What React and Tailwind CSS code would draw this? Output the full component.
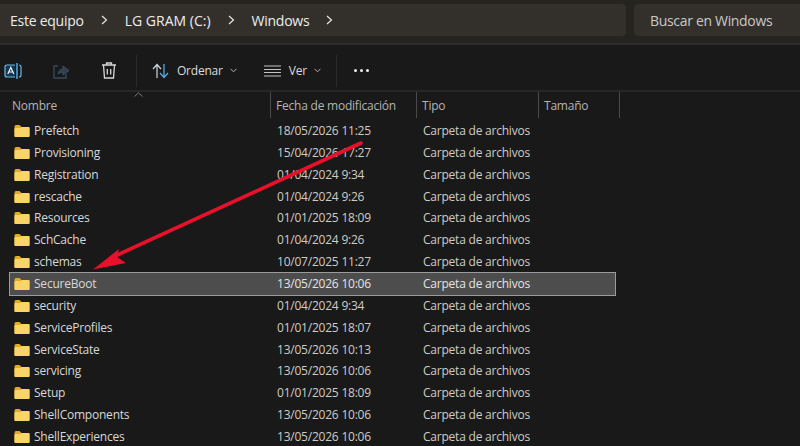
import React from "react";

const rows = [
  ["Prefetch", "18/05/2026 11:25"],
  ["Provisioning", "15/04/2026 17:27"],
  ["Registration", "01/04/2024 9:34"],
  ["rescache", "01/04/2024 9:26"],
  ["Resources", "01/01/2025 18:09"],
  ["SchCache", "01/04/2024 9:26"],
  ["schemas", "10/07/2025 11:27"],
  ["SecureBoot", "13/05/2026 10:06", true],
  ["security", "01/04/2024 9:34"],
  ["ServiceProfiles", "01/01/2025 18:07"],
  ["ServiceState", "13/05/2026 10:13"],
  ["servicing", "13/05/2026 10:06"],
  ["Setup", "01/01/2025 18:09"],
  ["ShellComponents", "13/05/2026 10:06"],
  ["ShellExperiences", "13/05/2026 10:06"],
];

function Folder() {
  return (
    <svg width="16" height="14" viewBox="0 0 16 14" className="shrink-0">
      <path d="M0.5 2.5 Q0.5 1 2 1 H5.5 L7.5 3 H14.5 Q15.5 3 15.5 4 V12 Q15.5 13 14.5 13 H1.5 Q0.5 13 0.5 12 Z" fill="#e3a928" />
      <path d="M0.5 5 Q0.5 4 1.5 4 H6.5 L8 3 H14.5 Q15.5 3 15.5 4 V12 Q15.5 13 14.5 13 H1.5 Q0.5 13 0.5 12 Z" fill="#f9d567" />
    </svg>
  );
}

function Crumb({ label, className }) {
  return (
    <>
      <span className={className}>{label}</span>
      <svg width="7" height="10" viewBox="0 0 7 10" className="mx-[17px]">
        <path d="M1 1 L5.5 5 L1 9" fill="none" stroke="#e8e6e3" strokeWidth="1.2" />
      </svg>
    </>
  );
}

function Chevron() {
  return (
    <svg width="7" height="5" viewBox="0 0 7 5">
      <path d="M0.5 0.8 L3.5 3.8 L6.5 0.8" fill="none" stroke="#b5b5b5" strokeWidth="1" />
    </svg>
  );
}

export default function App() {
  return (
    <div className="relative w-[800px] h-[446px] overflow-hidden bg-[#191919] text-[12px] tracking-[-0.22px] text-[#cfccc8] font-['Open_Sans','Noto_Sans',sans-serif]">
      {/* Address bar */}
      <div className="h-[45px] bg-[#262421] border-b-2 border-[#2f2d2a] flex gap-2 pt-1 pb-2">
        <div className="w-[626px] h-[32px] bg-[#33302c] rounded-r-[4px] flex items-center pl-[10px] text-[14px] tracking-[-0.25px] text-[#ececec]">
          <Crumb label="Este equipo" />
          <Crumb label="LG GRAM (C:)" className="tracking-[0px]" />
          <Crumb label="Windows" />
        </div>
        <div className="flex-1 h-[32px] bg-[#33302c] rounded-l-[4px] flex items-center pl-4 text-[14px] tracking-[-0.32px] text-[#c8c8c8]">
          Buscar en Windows
        </div>
      </div>

      {/* Toolbar */}
      <div className="h-[47px] flex items-center pt-[6px] border-b-2 border-[#272727] bg-[#191919]">
        <div className="w-[136px] shrink-0 flex items-center pl-[4px]">
          <svg width="18" height="18" viewBox="0 0 18 18">
            <path d="M11 3 H3 Q1 3 1 5 V13 Q1 15 3 15 H11" fill="#143850" stroke="#6fb6e6" strokeWidth="1.2" />
            <path d="M15 3 Q17 3 17 5 V13 Q17 15 15 15" fill="none" stroke="#6fb6e6" strokeWidth="1.2" />
            <path d="M3.8 12 L6.8 5.5 L9.8 12 M4.8 10 H8.8" fill="none" stroke="#e7f3fb" strokeWidth="1.2" />
            <path d="M13 1 V17" stroke="#4aa3e0" strokeWidth="1.6" />
          </svg>
          <svg width="20" height="20" viewBox="0 0 20 20" className="ml-[29px]">
            <path d="M7 5 H3 V17 H15 V13" fill="none" stroke="#37495a" strokeWidth="1.4" />
            <path d="M7 13 Q8 8 12 8 V5 L18 9.5 L12 14 V11 Q9 11 7 13 Z" fill="#2b3f50" stroke="#3c5063" strokeWidth="1" />
          </svg>
          <svg width="18" height="19" viewBox="0 0 18 19" className="ml-[29px]">
            <path d="M2 4 H16 M6.5 4 V2 H11.5 V4 M3.5 4 L4.5 17 H13.5 L14.5 4 M7.3 8 V13.5 M10.7 8 V13.5" fill="none" stroke="#d8d8d8" strokeWidth="1.3" />
          </svg>
        </div>
        <div className="w-px h-[32px] bg-[#2a2a2a]" />
        <div className="flex items-center pl-[15px] w-[199px]">
          <svg width="18" height="16" viewBox="0 0 18 16">
            <path d="M5 15 V2 M1 6 L5 1.5 L9 6" fill="none" stroke="#cfd8dd" strokeWidth="1.2" />
            <path d="M12 1 V14 M8 10 L12 14.5 L16 10" fill="none" stroke="#5aa9dc" strokeWidth="1.3" />
          </svg>
          <span className="ml-[7px] text-[#dcdcdc]">Ordenar</span>
          <span className="ml-[7px] flex"><Chevron /></span>
          <svg width="17" height="12" viewBox="0 0 17 12" className="ml-[27px]">
            <path d="M0 1 H17 M0 4.5 H17 M0 7.5 H17 M0 11 H17" stroke="#c4c4c4" strokeWidth="1" />
          </svg>
          <span className="ml-[8px] text-[#dcdcdc]">Ver</span>
          <span className="ml-[7px] flex"><Chevron /></span>
        </div>
        <div className="w-px h-[32px] bg-[#2a2a2a]" />
        <div className="ml-[17px] flex gap-[3px]">
          <span className="w-[3px] h-[3px] rounded-full bg-[#eeeeee]" />
          <span className="w-[3px] h-[3px] rounded-full bg-[#eeeeee]" />
          <span className="w-[3px] h-[3px] rounded-full bg-[#eeeeee]" />
        </div>
      </div>

      {/* Column headers */}
      <div className="relative h-[28px] flex text-[#b4b4b4]">
        <svg width="9" height="5" viewBox="0 0 9 5" className="absolute left-[134px] top-0">
          <path d="M0.5 4.5 L4.5 0.8 L8.5 4.5" fill="none" stroke="#7a7a7a" strokeWidth="1" />
        </svg>
        <div className="w-[271px] h-[26px] border-r border-[#4a4a4a] pl-[12px] pt-[2px] flex items-center">Nombre</div>
        <div className="w-[146px] h-[26px] border-r border-[#4a4a4a] pl-[5px] pt-[2px] flex items-center whitespace-nowrap">Fecha de modificación</div>
        <div className="w-[122px] h-[26px] border-r border-[#4a4a4a] pl-[5px] pt-[2px] flex items-center">Tipo</div>
        <div className="w-[81px] h-[26px] border-r border-[#4a4a4a] pl-[5px] pt-[2px] flex items-center">Tamaño</div>
      </div>

      {/* File rows */}
      <div className="flex flex-col ml-[10px] w-[605px]">
        {rows.map(([name, date, selected]) => (
          <div
            key={name}
            className={
              "h-[21.86px] shrink-0 flex items-center whitespace-nowrap " +
              (selected ? "bg-[#4d4d4d] outline outline-1 outline-[#9b9b9b] text-[#e4e4e4]" : "")
            }
          >
            <div className="w-[24px] pl-[4px] flex"><Folder /></div>
            <div className="w-[243px] text-[#d8d8d8]">{name}</div>
            <div className="w-[146px]">{date}</div>
            <div>Carpeta de archivos</div>
          </div>
        ))}
      </div>

      {/* Red annotation arrow */}
      <svg width="800" height="446" viewBox="0 0 800 446" className="absolute left-0 top-0 pointer-events-none">
        <path d="M361 143 L113 257" stroke="#e8102a" strokeWidth="3.6" strokeLinecap="round" />
        <path d="M93 269.5 L119 249 L117 257 L126 263 Z" fill="#e8102a" />
      </svg>
    </div>
  );
}
